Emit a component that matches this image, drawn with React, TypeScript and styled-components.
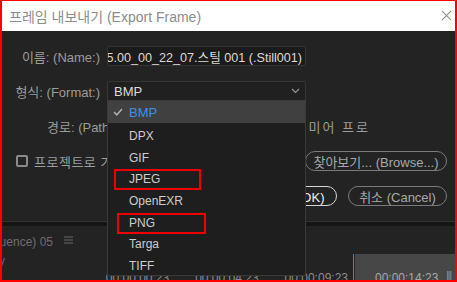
import React from "react";
import styled, { createGlobalStyle } from "styled-components";

const GlobalStyle = createGlobalStyle`
	html, body {
		margin: 0;
		padding: 0;
		background: #232323;
	}
	body {
		font-family: "Liberation Sans", "Noto Sans CJK KR", sans-serif;
	}
`;

const formats = ["BMP", "DPX", "GIF", "JPEG", "OpenEXR", "PNG", "Targa", "TIFF"];

// red boxes drawn over some menu items (annotation in the screenshot)
const marks: Record<string, { left: number; width: number; top: number }> = {
	JPEG: { left: 6, width: 87, top: 3 },
	PNG: { left: 9, width: 89, top: 3 },
};

const App = () => {
	return (
		<>
			<GlobalStyle />
			<Frame>
				<Dialog>
					<TitleBar>
						<Title>프레임 내보내기 (Export Frame)</Title>
						<CloseIcon viewBox="0 0 12 12">
							<path d="M1 1 L11 11 M11 1 L1 11" />
						</CloseIcon>
					</TitleBar>
					<Body>
						<FieldRow>
							<Label>이름: (Name:)</Label>
							<NameInput>
								<span>시퀀스 05.00_00_22_07.스틸 001 (.Still001)</span>
							</NameInput>
						</FieldRow>
						<FieldRow>
							<Label>형식: (Format:)</Label>
							<SelectWrap>
								<SelectBox>
									<span>BMP</span>
									<Chevron viewBox="0 0 9 6">
										<path d="M1 1 L4.5 4.5 L8 1" />
									</Chevron>
								</SelectBox>
								<Dropdown>
									{formats.map((f, i) => (
										<Item key={f} $selected={i === 0}>
											{i === 0 && (
												<Check viewBox="0 0 10 8">
													<path d="M1 4 L3.8 6.8 L9 1" />
												</Check>
											)}
											{f}
											{marks[f] && (
												<MarkBox
													style={{
														left: marks[f].left,
														width: marks[f].width,
														top: marks[f].top,
													}}
												/>
											)}
										</Item>
									))}
								</Dropdown>
							</SelectWrap>
						</FieldRow>
						<PathRow>
							<span>경로: (Path:) D:\</span>
							<PathValue>\Adobe\프리미어 프로</PathValue>
						</PathRow>
						<CheckRow>
							<CheckBox />
							<CheckText>프로젝트로 가져오기 (Import into project)</CheckText>
							<PillButton $width={142}>찾아보기... (Browse...)</PillButton>
						</CheckRow>
						<ButtonRow>
							<PillButton $width={80} $primary>
								확인 (OK)
							</PillButton>
							<PillButton $width={99}>취소 (Cancel)</PillButton>
						</ButtonRow>
					</Body>
				</Dialog>
				<Divider />
				<Timeline>
					<TimelineHeader>
						<TabName>
							<span>시퀀스 (Sequence) 05</span>
						</TabName>
						<MenuIcon viewBox="0 0 9 8">
							<path d="M0 1 H9 M0 4 H9 M0 7 H9" />
						</MenuIcon>
					</TimelineHeader>
					<TimelineBody>
						<Ruler>
							<TrackGlyph>V</TrackGlyph>
							<RulerLabels>
								<Timecode>00:00:00:23</Timecode>
								<Timecode>00:00:04:23</Timecode>
								<Timecode>00:00:09:23</Timecode>
							</RulerLabels>
							<Playhead />
						</Ruler>
						<InOutBlock>
							<BlockTime>00:00:14:23</BlockTime>
							<Grip>|||</Grip>
						</InOutBlock>
					</TimelineBody>
				</Timeline>
				<AnnotationBorder />
			</Frame>
		</>
	);
};

export default App;

const Frame = styled.div`
	position: relative;
	width: 457px;
	height: 282px;
	overflow: hidden;
	display: flex;
	flex-direction: column;
	background: #232323;
`;

const AnnotationBorder = styled.div`
	position: absolute;
	inset: 0;
	border: 2px solid #ff0000;
	border-top-width: 1px;
	pointer-events: none;
	z-index: 20;
`;

const Dialog = styled.div`
	display: flex;
	flex-direction: column;
`;

const TitleBar = styled.div`
	height: 31px;
	background: #ffffff;
	display: flex;
	align-items: center;
	justify-content: space-between;
	padding: 0 5px 0 9px;
	box-sizing: border-box;
`;

const Title = styled.div`
	font-size: 14px;
	color: #8c8c8c;
	padding-top: 1px;
`;

const CloseIcon = styled.svg`
	width: 11px;
	height: 11px;
	fill: none;
	stroke: #8a8a8a;
	stroke-width: 1.1;
`;

const Body = styled.div`
	height: 190px;
	box-sizing: border-box;
	padding-top: 15px;
	display: flex;
	flex-direction: column;
	gap: 15px;
	background: #232323;
	font-size: 13px;
	color: #9c9c9c;
`;

const FieldRow = styled.div`
	height: 20px;
	display: flex;
	align-items: center;
`;

const Label = styled.div`
	width: 100px;
	margin-right: 7px;
	text-align: right;
	white-space: nowrap;
`;

const NameInput = styled.div`
	width: 199px;
	height: 20px;
	box-sizing: border-box;
	background: #1b1b1b;
	border: 1px solid #343434;
	border-radius: 2px;
	display: flex;
	align-items: center;
	justify-content: flex-end;
	padding-right: 3px;
	overflow: hidden;
	white-space: nowrap;
	color: #dedad2;
	font-size: 12.6px;
`;

const SelectWrap = styled.div`
	position: relative;
	width: 199px;
`;

const SelectBox = styled.div`
	height: 20px;
	box-sizing: border-box;
	background: #202020;
	border: 1px solid #363636;
	border-radius: 2px;
	display: flex;
	align-items: center;
	justify-content: space-between;
	padding: 0 5px 0 6px;
	color: #dcdcdc;
`;

const Chevron = styled.svg`
	width: 9px;
	height: 6px;
	fill: none;
	stroke: #9a9a9a;
	stroke-width: 1.1;
`;

const Dropdown = styled.div`
	position: absolute;
	top: 19px;
	left: 0;
	width: 199px;
	box-sizing: border-box;
	background: #1e1e1e;
	border: 1px solid #3a3a3a;
	z-index: 10;
	font-size: 12px;
`;

const Item = styled.div<{ $selected?: boolean }>`
	position: relative;
	height: ${(p) => (p.$selected ? "22px" : "21.7px")};
	box-sizing: border-box;
	display: flex;
	align-items: center;
	padding-left: 21px;
	padding-top: ${(p) => (p.$selected ? "0" : "4px")};
	color: ${(p) => (p.$selected ? "#3d8fe8" : "#cdcdcd")};
	background: ${(p) => (p.$selected ? "#404040" : "transparent")};
	font-size: ${(p) => (p.$selected ? "13px" : "12px")};
`;

const Check = styled.svg`
	position: absolute;
	left: 5px;
	top: 7px;
	width: 10px;
	height: 8px;
	fill: none;
	stroke: #b0b0b0;
	stroke-width: 1.5;
`;

const MarkBox = styled.div`
	position: absolute;
	height: 21px;
	box-sizing: border-box;
	border: 2px solid #ee0000;
	pointer-events: none;
`;

const PathRow = styled.div`
	height: 20px;
	display: flex;
	align-items: center;
	padding: 0 87px 0 47px;
	white-space: nowrap;
	overflow: hidden;
`;

const PathValue = styled.span`
	margin-left: auto;
	letter-spacing: 2px;
`;

const CheckRow = styled.div`
	height: 20px;
	display: flex;
	align-items: center;
	padding: 0 10px 0 16px;
	white-space: nowrap;
`;

const CheckBox = styled.div`
	width: 12px;
	height: 12px;
	box-sizing: border-box;
	border: 2px solid #8a8a8a;
	border-radius: 2px;
	margin-right: 6px;
	flex-shrink: 0;
`;

const CheckText = styled.span`
	overflow: hidden;
	letter-spacing: 0.5px;
`;

const PillButton = styled.div<{ $width: number; $primary?: boolean }>`
	width: ${(p) => p.$width}px;
	height: 20px;
	box-sizing: border-box;
	flex-shrink: 0;
	margin-left: auto;
	border: 1px solid ${(p) => (p.$primary ? "#d6d6d6" : "#7a7a7a")};
	border-radius: 10px;
	display: flex;
	align-items: center;
	justify-content: center;
	color: ${(p) => (p.$primary ? "#f0f0f0" : "#a8a8a8")};
	white-space: nowrap;
`;

const ButtonRow = styled.div`
	height: 20px;
	display: flex;
	align-items: center;
	justify-content: flex-end;
	gap: 11px;
	padding-right: 10px;

	${PillButton} {
		margin-left: 0;
	}
`;

const Divider = styled.div`
	height: 5px;
	box-sizing: border-box;
	border-top: 1px solid #333333;
	background: #151515;
`;

const Timeline = styled.div`
	flex: 1;
	display: flex;
	flex-direction: column;
	background: #232323;
	font-size: 12px;
`;

const TimelineHeader = styled.div`
	height: 28px;
	display: flex;
	align-items: center;
	color: #6e6e6e;
	font-size: 12px;
`;

const TabName = styled.div`
	width: 53px;
	display: flex;
	justify-content: flex-end;
	overflow: hidden;
	white-space: nowrap;
`;

const MenuIcon = styled.svg`
	width: 9px;
	height: 8px;
	margin-left: 11px;
	fill: none;
	stroke: #6a6a6a;
	stroke-width: 1;
`;

const TimelineBody = styled.div`
	flex: 1;
	display: flex;
`;

const Ruler = styled.div`
	flex: 1;
	display: flex;
	align-items: flex-end;
	position: relative;
	overflow: hidden;
`;

const TrackGlyph = styled.span`
	position: absolute;
	left: -3px;
	top: 2px;
	color: #6a6a6a;
	font-size: 12px;
`;

const RulerLabels = styled.div`
	flex: 1;
	display: flex;
	justify-content: flex-end;
	gap: 26px;
	padding-right: 5px;
	margin-bottom: -3px;
`;

const Timecode = styled.span`
	color: #8c8c8c;
	white-space: nowrap;
`;

const Playhead = styled.div`
	width: 1px;
	align-self: stretch;
	background: #2e8ef0;
`;

const InOutBlock = styled.div`
	width: 102px;
	margin-left: 1px;
	background: #474747;
	display: flex;
	align-items: flex-end;
	padding-left: 20px;
	box-sizing: border-box;
	color: #a8a8a8;
	overflow: hidden;
`;

const BlockTime = styled.span`
	margin-bottom: -3px;
	white-space: nowrap;
`;

const Grip = styled.span`
	margin-left: auto;
	margin-right: 6px;
	margin-bottom: 1px;
	font-size: 10px;
	letter-spacing: -1px;
	color: #9a9a9a;
`;
